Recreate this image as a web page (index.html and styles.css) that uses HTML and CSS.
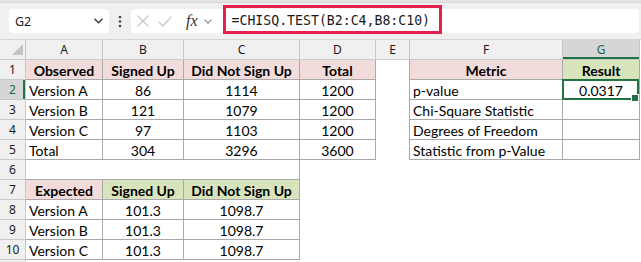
FILE: index.html
```html
<!DOCTYPE html>
<html lang="en">
<head>
    <meta charset="UTF-8">
    <meta name="viewport" content="width=device-width, initial-scale=1.0">
    <title>CHISQ.TEST</title>
    <link rel="stylesheet" href="styles.css">
</head>
<body>
    <div class="toolbar">
        <div class="namebox">
            <span>G2</span>
            <svg width="9" height="6" viewBox="0 0 9 6"><polyline points="0.5,0.8 4.5,4.8 8.5,0.8" fill="none" stroke="#333" stroke-width="1.3"/></svg>
        </div>
        <svg class="dots" width="6" height="24" viewBox="0 0 6 24"><circle cx="3" cy="8" r="1.3" fill="#444"/><circle cx="3" cy="12.5" r="1.3" fill="#444"/><circle cx="3" cy="17" r="1.3" fill="#444"/></svg>
        <div class="formula">
            <svg class="ico-x" width="12" height="12" viewBox="0 0 12 12"><path d="M0.5 0.5 L11.5 11.5 M11.5 0.5 L0.5 11.5" stroke="#c6c6c6" stroke-width="1.2"/></svg>
            <svg class="ico-ok" width="14" height="11" viewBox="0 0 14 11"><polyline points="0.6,5.6 4.8,10 13.4,0.6" fill="none" stroke="#c6c6c6" stroke-width="1.2"/></svg>
            <span class="fx">fx</span>
            <svg class="ico-more" width="8" height="5" viewBox="0 0 8 5"><polyline points="0.5,0.6 4,4.2 7.5,0.6" fill="none" stroke="#8a8a8a" stroke-width="1.1"/></svg>
            <div class="formula-text">=CHISQ.TEST(B2:C4,B8:C10)</div>
        </div>
    </div>

    <div class="sheet">
        <!-- column headers -->
        <div class="corner"><svg width="25" height="19" viewBox="0 0 25 19"><polygon points="23,4 23,15 12,15" fill="#c2c2c2"/></svg></div>
        <div class="ch">A</div>
        <div class="ch">B</div>
        <div class="ch">C</div>
        <div class="ch">D</div>
        <div class="ch">E</div>
        <div class="ch">F</div>
        <div class="ch sel">G</div>

        <!-- row 1 -->
        <div class="rh">1</div>
        <div class="c bx hd pink">Observed</div>
        <div class="c bx hd pink">Signed Up</div>
        <div class="c bx hd pink">Did Not Sign Up</div>
        <div class="c bx hd pink">Total</div>
        <div class="c br"></div>
        <div class="c bx hd pink">Metric</div>
        <div class="c bx hd green">Result</div>

        <!-- row 2 -->
        <div class="rh sel">2</div>
        <div class="c bx">Version A</div>
        <div class="c bx num">86</div>
        <div class="c bx num">1114</div>
        <div class="c bx num">1200</div>
        <div class="c br"></div>
        <div class="c bx">p-value</div>
        <div class="c bx num active">0.0317</div>

        <!-- row 3 -->
        <div class="rh">3</div>
        <div class="c bx">Version B</div>
        <div class="c bx num">121</div>
        <div class="c bx num">1079</div>
        <div class="c bx num">1200</div>
        <div class="c br"></div>
        <div class="c bx">Chi-Square Statistic</div>
        <div class="c bx"></div>

        <!-- row 4 -->
        <div class="rh">4</div>
        <div class="c bx">Version C</div>
        <div class="c bx num">97</div>
        <div class="c bx num">1103</div>
        <div class="c bx num">1200</div>
        <div class="c br"></div>
        <div class="c bx">Degrees of Freedom</div>
        <div class="c bx"></div>

        <!-- row 5 -->
        <div class="rh">5</div>
        <div class="c bx">Total</div>
        <div class="c bx num">304</div>
        <div class="c bx num">3296</div>
        <div class="c bx num">3600</div>
        <div class="c br"></div>
        <div class="c bx">Statistic from p-Value</div>
        <div class="c bx"></div>

        <!-- row 6 -->
        <div class="rh">6</div>
        <div class="c bb"></div>
        <div class="c bb"></div>
        <div class="c bx"></div>
        <div class="c"></div>
        <div class="c"></div>
        <div class="c"></div>
        <div class="c"></div>

        <!-- row 7 -->
        <div class="rh">7</div>
        <div class="c bx hd pink">Expected</div>
        <div class="c bx hd green">Signed Up</div>
        <div class="c bx hd green">Did Not Sign Up</div>
        <div class="c"></div>
        <div class="c"></div>
        <div class="c"></div>
        <div class="c"></div>

        <!-- row 8 -->
        <div class="rh">8</div>
        <div class="c bx">Version A</div>
        <div class="c bx num">101.3</div>
        <div class="c bx num">1098.7</div>
        <div class="c"></div>
        <div class="c"></div>
        <div class="c"></div>
        <div class="c"></div>

        <!-- row 9 -->
        <div class="rh">9</div>
        <div class="c bx">Version B</div>
        <div class="c bx num">101.3</div>
        <div class="c bx num">1098.7</div>
        <div class="c"></div>
        <div class="c"></div>
        <div class="c"></div>
        <div class="c"></div>

        <!-- row 10 -->
        <div class="rh">10</div>
        <div class="c bx">Version C</div>
        <div class="c bx num">101.3</div>
        <div class="c bx num">1098.7</div>
        <div class="c"></div>
        <div class="c"></div>
        <div class="c"></div>
        <div class="c"></div>

        <!-- top edge of row 11 -->
        <div class="rh"></div>
        <div class="c"></div>
        <div class="c"></div>
        <div class="c"></div>
        <div class="c"></div>
        <div class="c"></div>
        <div class="c"></div>
        <div class="c"></div>
    </div>
</body>
</html>
```

FILE: styles.css
```css
* {
    box-sizing: border-box;
}
body {
    margin: 0;
    width: 641px;
    height: 262px;
    overflow: hidden;
    background: #fff;
    font-family: Lato, "Liberation Sans", sans-serif;
}

/* name box + formula bar */
.toolbar {
    height: 40px;
    display: flex;
    align-items: flex-start;
    padding: 7px 0 0 9px;
    background: #f0f0f0;
    border-top: 2px solid #e3e3e3;
    border-bottom: 1px solid #d4d4d4;
    box-shadow: inset 0 1px 0 #d6d6d6;
}
.namebox {
    width: 100px;
    height: 24px;
    display: flex;
    align-items: center;
    justify-content: space-between;
    padding: 0 6px;
    background: #fff;
    border-radius: 4px;
    font: 12.5px "Noto Sans", sans-serif;
    color: #222;
}
.dots {
    margin-left: 8px;
}
.formula {
    width: 508px;
    height: 24px;
    margin-left: 8px;
    display: flex;
    align-items: center;
    padding-left: 6px;
    background: #fff;
    border-radius: 4px;
}
.ico-ok {
    margin-left: 9px;
}
.fx {
    margin-left: 14px;
    font: italic 16px "Liberation Serif", serif;
    color: #333;
    line-height: 20px;
}
.ico-more {
    margin-left: 6px;
}
.formula-text {
    align-self: flex-start;
    margin: -4px 0 0 11px;
    width: 219px;
    height: 29px;
    padding: 2px 0 0 6px;
    border: 3px solid #e5204e;
    font: 13.2px "DejaVu Sans Mono", monospace;
    line-height: 21px;
    color: #1a1a1a;
    white-space: nowrap;
}

/* worksheet grid */
.sheet {
    display: grid;
    grid-template-columns: 26px 77px 81px 116px 76px 34px 153px 77px;
    grid-auto-rows: 20px;
    height: 222px;
    overflow: hidden;
}
.corner, .ch, .rh {
    background: #f0f0f0;
    border-right: 1px solid #c8c8c8;
    border-bottom: 1px solid #c8c8c8;
    font: 12px "Noto Sans", sans-serif;
    color: #1a1a1a;
    text-align: center;
    line-height: 18px;
    padding-top: 1px;
}
.corner {
    padding: 0;
}
.corner svg {
    display: block;
}
.ch.sel {
    background: #d6d6d6;
    color: #1d6b40;
    box-shadow: inset 0 -2px 0 #217346;
}
.rh.sel {
    background: #d6d6d6;
    color: #1d6b40;
    box-shadow: inset -2px 0 0 #217346;
}

.c {
    font-size: 14px;
    color: #000;
    line-height: 16px;
    padding: 3px 3px 0;
    white-space: nowrap;
}
.bx {
    border-right: 1px solid #a9a9a9;
    border-bottom: 1px solid #a9a9a9;
}
.br {
    border-right: 1px solid #a9a9a9;
}
.bb {
    border-bottom: 1px solid #a9a9a9;
}
.num {
    text-align: center;
}
.hd {
    font-weight: bold;
    text-align: center;
}
.pink {
    background: #f2dcdb;
}
.green {
    background: #d8e4bc;
}

/* selected cell */
.active {
    position: relative;
}
.active::after {
    content: "";
    position: absolute;
    left: -1px;
    top: -1px;
    right: 0;
    bottom: -1px;
    border: 2px solid #217346;
}
.active::before {
    content: "";
    position: absolute;
    right: 0;
    bottom: -3px;
    width: 6px;
    height: 6px;
    background: #217346;
    border: 1px solid #fff;
    z-index: 1;
}
```
